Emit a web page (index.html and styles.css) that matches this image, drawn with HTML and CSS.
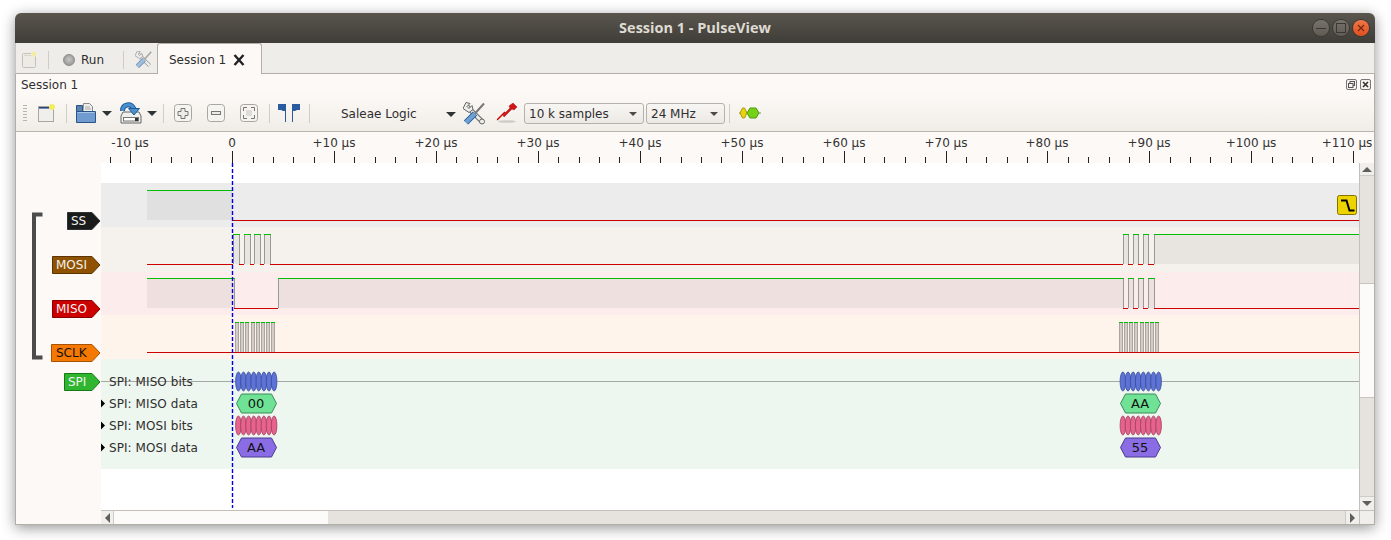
FILE: index.html
```html
<!DOCTYPE html>
<html lang="en">
<head>
<meta charset="utf-8">
<title>Session 1 - PulseView</title>
<link rel="stylesheet" href="styles.css">
</head>
<body>
<div class="window">
  <header class="titlebar">
    <span class="title">Session 1 - PulseView</span>
    <div class="winbtns">
      <span class="winbtn"><svg width="16" height="16" viewBox="0 0 16 16"><path class="wb-glyph" d="M3 8.5H13"/></svg></span>
      <span class="winbtn"><svg width="16" height="16" viewBox="0 0 16 16"><rect class="wb-glyph" x="3.5" y="3.5" width="9" height="9"/></svg></span>
      <span class="winbtn close"><svg width="16" height="16" viewBox="0 0 16 16"><path class="wb-close" d="M5 5L11 11M11 5L5 11"/></svg></span>
    </div>
  </header>

  <nav class="tabbar">
    <svg class="ta-new" width="15" height="17" viewBox="0 0 15 17"><rect x="0.5" y="2.5" width="13" height="14" rx="1" fill="#ecebe6" stroke="#c4c1bb"/><path d="M2 4.500H11" stroke="#d8d6d2"/><circle cx="12" cy="3" r="2.500" fill="#f3ec9e" stroke="#f3efc8"/></svg>
    <span class="tsep ta-sep1"></span>
    <span class="run-led ta-led"></span>
    <span class="run-label">Run</span>
    <span class="tsep ta-sep2"></span>
    <svg class="ta-tool" width="17" height="17" viewBox="0 0 22 22">
      <g opacity=".6">
        <path d="M4 4L19 19" stroke="#666" stroke-width="5" fill="none"/><path d="M4 4L19 19" stroke="#eee" stroke-width="3" fill="none"/>
        <path d="M0 6L3 0l4 1-3 3 2 2 3-3 1 4-4 3z" fill="#eee" stroke="#666"/>
        <path d="M21 1L12 11" stroke="#777" stroke-width="2" fill="none"/>
        <path d="M12 11L3 20" stroke="#1f5a96" stroke-width="6" fill="none"/><path d="M12 11L3 20" stroke="#6fa0d4" stroke-width="4" fill="none"/>
      </g>
    </svg>
    <div class="tab">
      <span>Session 1</span>
      <svg class="tab-x" width="12" height="12" viewBox="0 0 12 12"><path d="M1.500 1L10.500 11M10.500 1L1.500 11" stroke="#222" stroke-width="2.400" fill="none"/></svg>
    </div>
  </nav>

  <section class="panel">
    <div class="dock-title">
      <span>Session 1</span>
      <div class="dock-btns">
        <svg width="11" height="11" viewBox="0 0 11 11"><rect x="0.5" y="0.5" width="10" height="10" rx="1.5" fill="#f5f2ee" stroke="#777"/><rect x="4" y="2.5" width="4.5" height="4" fill="none" stroke="#555"/><rect x="2.5" y="4.5" width="4.5" height="4" fill="#f5f2ee" stroke="#555"/></svg>
        <svg width="11" height="11" viewBox="0 0 11 11"><rect x="0.5" y="0.5" width="10" height="10" rx="1.5" fill="#f5f2ee" stroke="#777"/><path d="M3 3L8 8M8 3L3 8" stroke="#333" stroke-width="1.6"/></svg>
      </div>
    </div>

    <div class="toolbar">
      <span class="grip"></span>
      <svg class="i-new" width="18" height="18" viewBox="0 0 18 18"><rect x="1.5" y="2.5" width="15" height="15" fill="#f1efec" stroke="#a8a6a2"/><rect x="2" y="3" width="13" height="1.6" fill="#26477e"/><circle cx="15" cy="3" r="2.700" fill="#f8ef4a" stroke="#f2e88c"/></svg>
      <span class="tsep i-sep1"></span>
      <svg class="i-open" width="20" height="20" viewBox="0 0 20 20"><path d="M7.500 0.500h6l3 3v6h-9.500z" fill="#eeeeec" stroke="#888"/><path d="M9 4h5M9 6h6" stroke="#aaa"/><path d="M0.500 2.500h6v16h-6z" fill="#5a82b0" stroke="#2d5286"/><path d="M0.500 19.500V8.500h19v11z" fill="#6f9bd1" stroke="#2d5286"/><path d="M1.500 9.500h17" stroke="#a6c4e6"/></svg>
      <span class="caret i-c1"></span>
      <svg class="i-save" width="22" height="22" viewBox="0 0 22 22"><path d="M1 14l2-4h16l2 4v7H1z" fill="#eeeeec" stroke="#666"/><rect x="3.500" y="15.500" width="15" height="3.500" fill="#fff" stroke="#777"/><rect x="15" y="16" width="3" height="3" fill="#333"/><path d="M2.500 9C2.500 2 11 0.500 14 7" fill="none" stroke="#1f5a96" stroke-width="5"/><path d="M2.500 9C2.500 2 11 0.500 14 7" fill="none" stroke="#4a90d0" stroke-width="3"/><path d="M8.500 6.500h11l-5.500 6.500z" fill="#4a90d0" stroke="#1f5a96"/></svg>
      <span class="caret i-c2"></span>
      <span class="tsep i-sep2"></span>
      <svg class="i-zin" width="18" height="18" viewBox="0 0 18 18"><rect class="zbtn" x="0.500" y="0.500" width="17" height="17" rx="3"/><path class="zg" d="M7 4.500h4v3h3v4h-3v3H7v-3H4v-4h3z"/></svg>
      <svg class="i-zout" width="18" height="18" viewBox="0 0 18 18"><rect class="zbtn" x="0.500" y="0.500" width="17" height="17" rx="3"/><rect class="zg" x="4.500" y="7.500" width="9" height="3"/></svg>
      <svg class="i-zfit" width="18" height="18" viewBox="0 0 18 18"><rect class="zbtn" x="0.500" y="0.500" width="17" height="17" rx="3"/><path class="zg zg-line" d="M3.500 7V3.500H7M11 3.500h3.500V7M14.500 11v3.500H11M7 14.500H3.500V11"/><rect x="6" y="6" width="6" height="6" fill="#dedcd8"/></svg>
      <span class="tsep i-sep3"></span>
      <svg class="i-flags" width="22" height="18" viewBox="0 0 22 18"><path d="M0 0h8v18H7V7H5L3 6H0zM14 0h8v6h-3l-2 1h-2v11h-1z" fill="#2a5b9e"/></svg>
      <span class="tsep i-sep4"></span>
      <div class="device"><span>Saleae Logic</span><span class="caret"></span></div>
      <svg class="i-tool" width="22" height="23" viewBox="0 0 22 22">
        <path d="M4 4L19 19" stroke="#666" stroke-width="5" fill="none"/><path d="M4 4L19 19" stroke="#eeeeec" stroke-width="3" fill="none"/>
        <path d="M0 6L3 0l4 1-3 3 2 2 3-3 1 4-4 3z" fill="#eeeeec" stroke="#666"/>
        <circle cx="19" cy="19" r="2.500" fill="#eeeeec" stroke="#666"/>
        <path d="M21 1L12 11" stroke="#777" stroke-width="2" fill="none"/>
        <path d="M12 11L3 20" stroke="#1f5a96" stroke-width="6" fill="none"/><path d="M12 11L3 20" stroke="#6fa0d4" stroke-width="4" fill="none"/>
      </svg>
      <svg class="i-probe" width="20" height="20" viewBox="0 0 20 20"><ellipse cx="10" cy="18.500" rx="9" ry="1.300" fill="#cfcbc6"/><path d="M0 17L8 9" stroke="#c00" stroke-width="1.500"/><path d="M6 12L13 5l-1-2 4-3 4 4-3 3-2-1-8 8z" fill="#d01818" stroke="#a50e0e" stroke-width="0.500"/></svg>
      <div class="combo samples"><span>10 k samples</span><span class="combo-caret"></span></div>
      <div class="combo rate"><span>24 MHz</span><span class="combo-caret"></span></div>
      <span class="tsep i-sep5"></span>
      <svg class="i-dec" width="22" height="12" viewBox="0 0 22 12"><path d="M0 6h22" stroke="#888"/><path d="M1 6l2.500-5h2L8 6l-2.500 5h-2z" fill="#e9d30a" stroke="#a89a0a"/><path d="M8 6l3-5h6l3 5-3 5h-6z" fill="#74d216" stroke="#4f9a0a"/></svg>
    </div>

    <div class="ruler">
      <svg width="1358" height="31" viewBox="16 132 1358 31">
        <g class="rlabels">
          <text x="130" y="147">-10 µs</text><text x="232" y="147">0</text><text x="334" y="147">+10 µs</text><text x="436" y="147">+20 µs</text><text x="538" y="147">+30 µs</text><text x="640" y="147">+40 µs</text><text x="742" y="147">+50 µs</text><text x="844" y="147">+60 µs</text><text x="946" y="147">+70 µs</text><text x="1047" y="147">+80 µs</text><text x="1149" y="147">+90 µs</text><text x="1251" y="147">+100 µs</text><text x="1347" y="147">+110 µs</text>
        </g>
        <path class="ticks" d="M130.500 151V163M232.500 151V163M334.500 151V163M436.500 151V163M538.500 151V163M640.500 151V163M742.500 151V163M844.500 151V163M946.500 151V163M1047.500 151V163M1149.500 151V163M1251.500 151V163M1353.500 151V163
        M110.500 157V163M151.500 157V163M171.500 157V163M191.500 157V163M212.500 157V163M253.500 157V163M273.500 157V163M293.500 157V163M314.500 157V163M354.500 157V163M375.500 157V163M395.500 157V163M416.500 157V163M456.500 157V163M477.500 157V163M497.500 157V163M518.500 157V163M558.500 157V163M579.500 157V163M599.500 157V163M619.500 157V163M660.500 157V163M681.500 157V163M701.500 157V163M721.500 157V163M762.500 157V163M782.500 157V163M803.500 157V163M823.500 157V163M864.500 157V163M884.500 157V163M905.500 157V163M925.500 157V163M966.500 157V163M986.500 157V163M1007.500 157V163M1027.500 157V163M1068.500 157V163M1088.500 157V163M1109.500 157V163M1129.500 157V163M1170.500 157V163M1190.500 157V163M1210.500 157V163M1231.500 157V163M1272.500 157V163M1292.500 157V163M1312.500 157V163M1333.500 157V163"/>
      </svg>
    </div>

    <div class="viewport">
      <div class="headers">
        <svg class="bracket" width="14" height="150" viewBox="0 0 14 150"><path d="M12.500 2.500H4V145.500H12.500" fill="none" stroke="#4c4c4c" stroke-width="4"/></svg>
        <svg class="tag t-first" width="34" height="18" viewBox="0 0 34 18"><path d="M0.500 0.500H25L33 9L25 17.500H0.500z" fill="#1a1c1c" stroke="#2e3436"/><text x="4" y="13" class="tagtxt">SS</text></svg>
        <svg class="tag" width="49" height="18" viewBox="0 0 49 18"><path d="M0.500 0.500H40L48 9L40 17.500H0.500z" fill="#8f5202" stroke="#5e3500"/><text x="4" y="13" class="tagtxt">MOSI</text></svg>
        <svg class="tag" width="49" height="18" viewBox="0 0 49 18"><path d="M0.500 0.500H40L48 9L40 17.500H0.500z" fill="#cc0000" stroke="#8a0000"/><text x="4" y="13" class="tagtxt">MISO</text></svg>
        <svg class="tag" width="50" height="18" viewBox="0 0 50 18"><path d="M0.500 0.500H41L49 9L41 17.500H0.500z" fill="#f57900" stroke="#a85300"/><text x="5" y="13" class="tagtxt dark">SCLK</text></svg>
        <svg class="tag t-spi" width="37" height="18" viewBox="0 0 37 18"><path d="M0.500 0.500H28L36 9L28 17.500H0.500z" fill="#2fb52f" stroke="#157a15"/><text x="4" y="13" class="tagtxt">SPI</text></svg>
      </div>

      <svg class="traces" width="1258" height="347" viewBox="101 163 1258 347">
        <defs>
          <g id="bits">
            <ellipse cx="2.900" rx="2.800" ry="9.500"/><ellipse cx="8" rx="2.800" ry="9.500"/><ellipse cx="13.100" rx="2.800" ry="9.500"/><ellipse cx="18.200" rx="2.800" ry="9.500"/><ellipse cx="23.300" rx="2.800" ry="9.500"/><ellipse cx="28.400" rx="2.800" ry="9.500"/><ellipse cx="33.500" rx="2.800" ry="9.500"/><ellipse cx="38.600" rx="2.800" ry="9.500"/>
          </g>
          <polygon id="hex" points="0.500,0 5.500,-9.500 35.500,-9.500 40.500,0 35.500,9.500 5.500,9.500"/>
        </defs>
        <rect class="band b-ss" x="101" y="183" width="1258" height="44"/>
        <rect class="band b-mosi" x="101" y="227" width="1258" height="45"/>
        <rect class="band b-miso" x="101" y="272" width="1258" height="43"/>
        <rect class="band b-sclk" x="101" y="315" width="1258" height="44"/>
        <rect class="band b-spi" x="101" y="359" width="1258" height="110"/>

        <path class="hi-fill" d="M147 191H232V220H147z"/>
        <path class="hi-fill" d="M233 235H239V264H233zM244 235H250V264H244zM254 235H260V264H254zM264 235H270V264H264zM1123 235H1128V264H1123zM1133 235H1138V264H1133zM1143 235H1148V264H1143zM1154 235H1359V264H1154z"/>
        <path class="hi-fill" d="M147 279H234V308H147zM278 279H1123V308H278zM1128 279H1133V308H1128zM1138 279H1143V308H1138zM1148 279H1154V308H1148z"/>
        <path class="hi-fill strong" d="M235 323H239V352H235zM240 323H244V352H240zM245 323H249V352H245zM251 323H255V352H251zM256 323H260V352H256zM261 323H265V352H261zM266 323H270V352H266zM271 323H275V352H271zM1119 323H1123V352H1119zM1124 323H1128V352H1124zM1129 323H1133V352H1129zM1134 323H1138V352H1134zM1140 323H1144V352H1140zM1145 323H1149V352H1145zM1150 323H1154V352H1150zM1155 323H1159V352H1155z"/>

        <path class="edge" d="M233.500 235V264M239.500 235V264M244.500 235V264M250.500 235V264M254.500 235V264M260.500 235V264M264.500 235V264M270.500 235V264M1123.500 235V264M1128.500 235V264M1133.500 235V264M1138.500 235V264M1143.500 235V264M1148.500 235V264M1154.500 235V264
        M234.500 279V308M278.500 279V308M1123.500 279V308M1128.500 279V308M1133.500 279V308M1138.500 279V308M1143.500 279V308M1148.500 279V308M1154.500 279V308"/>
        <path class="edge soft" d="M235.500 323V352M238.500 323V352M240.500 323V352M243.500 323V352M245.500 323V352M248.500 323V352M251.500 323V352M254.500 323V352M256.500 323V352M259.500 323V352M261.500 323V352M264.500 323V352M266.500 323V352M269.500 323V352M271.500 323V352M274.500 323V352
        M1119.500 323V352M1122.500 323V352M1124.500 323V352M1127.500 323V352M1129.500 323V352M1132.500 323V352M1134.500 323V352M1137.500 323V352M1140.500 323V352M1143.500 323V352M1145.500 323V352M1148.500 323V352M1150.500 323V352M1153.500 323V352M1155.500 323V352M1158.500 323V352"/>

        <path class="high" d="M147 190.500H232M233 234.500H240M244 234.500H251M254 234.500H261M264 234.500H271M1123 234.500H1129M1133 234.500H1139M1143 234.500H1149M1154 234.500H1359M147 278.500H235M278 278.500H1124M1128 278.500H1134M1138 278.500H1144M1148 278.500H1155M235 322.500H239M240 322.500H244M245 322.500H249M251 322.500H255M256 322.500H260M261 322.500H265M266 322.500H270M271 322.500H275M1119 322.500H1123M1124 322.500H1128M1129 322.500H1133M1134 322.500H1138M1140 322.500H1144M1145 322.500H1149M1150 322.500H1154M1155 322.500H1159"/>
        <path class="low" d="M232 220.500H1359M147 264.500H233M239 264.500H244M250 264.500H254M260 264.500H264M270 264.500H1123M1128 264.500H1133M1138 264.500H1143M1148 264.500H1154M234 308.500H278M1123 308.500H1128M1133 308.500H1138M1143 308.500H1148M1154 308.500H1359M147 352.500H1359"/>

        <path class="spi-line" d="M101 381.500H1359"/>
        <g class="rowlabels">
          <text x="109" y="386">SPI: MISO bits</text>
          <text x="109" y="408">SPI: MISO data</text>
          <text x="109" y="430">SPI: MOSI bits</text>
          <text x="109" y="452">SPI: MOSI data</text>
        </g>
        <path class="expander" d="M101 399.500L105 403.500L101 407.500zM101 421.500L105 425.500L101 429.500zM101 443.500L105 447.500L101 451.500z"/>

        <use href="#bits" class="bits-blue" x="235.500" y="381.500"/>
        <use href="#bits" class="bits-blue" x="1120" y="381.500"/>
        <use href="#bits" class="bits-pink" x="235.500" y="425.500"/>
        <use href="#bits" class="bits-pink" x="1120" y="425.500"/>
        <use href="#hex" class="hex-green" x="236" y="403.500"/>
        <use href="#hex" class="hex-green" x="1120" y="403.500"/>
        <use href="#hex" class="hex-purple" x="236" y="447.500"/>
        <use href="#hex" class="hex-purple" x="1120" y="447.500"/>
        <g class="hexlabels">
          <text x="256" y="408">00</text><text x="1140" y="408">AA</text>
          <text x="256" y="452">AA</text><text x="1140" y="452">55</text>
        </g>

        <path class="cursor" d="M232.500 163V508"/>

        <rect class="trig" x="1337.500" y="195.500" width="19" height="19" rx="2"/>
        <path class="trig-glyph" d="M1341 200.500H1346.500L1349.500 210.500H1354.500"/>
      </svg>

      <div class="vscroll">
        <span class="sbtn up"></span>
        <span class="track v1"></span>
        <span class="thumb v2"></span>
        <span class="track v3"></span>
        <span class="sbtn down"></span>
      </div>
    </div>

    <div class="hscroll-row">
      <div class="hs-pad"></div>
      <div class="hscroll">
        <span class="sbtn left"></span>
        <span class="thumb h1"></span>
        <span class="track h2"></span>
        <span class="sbtn right"></span>
      </div>
      <div class="corner"></div>
    </div>
  </section>
</div>
</body>
</html>
```

FILE: styles.css
```css
* { box-sizing: border-box; }
html, body { margin: 0; height: 100%; background: #fff; overflow: hidden; }
body { font-family: "DejaVu Sans", sans-serif; font-size: 12px; color: #2e2e2e; }

.window {
  width: 1360px;
  height: 512px;
  margin: 13px 0 0 15px;
  display: flex;
  flex-direction: column;
  border-radius: 6px 6px 0 0;
  box-shadow: 0 3px 14px rgba(0, 0, 0, .42);
  background: #efedea;
}
.titlebar {
  height: 30px;
  flex: none;
  display: flex;
  align-items: center;
  justify-content: center;
  position: relative;
  padding-bottom: 2px;
  border-radius: 6px 6px 0 0;
  background: linear-gradient(#5a564e, #3f3d38);
}
.title { font: 700 14.5px "Open Sans", sans-serif; color: #dfdbd2; }
.winbtns { position: absolute; right: 6px; top: 7px; display: flex; gap: 4px; }
.winbtn {
  width: 16px; height: 16px; border-radius: 50%;
  background: linear-gradient(#77736b, #5f5b54);
  box-shadow: 0 0 0 1px #3a3833;
}
.winbtn svg { display: block; }
.winbtn.close { background: linear-gradient(#f07746, #df4f1f); }
.wb-glyph { fill: none; stroke: #3a3833; }
.wb-close { fill: none; stroke: #6d2a10; stroke-width: 1.2; }

.tabbar {
  height: 31px;
  flex: none;
  display: flex;
  align-items: center;
  padding: 3px 0 0 6px;
  background: #efedea;
  border-bottom: 1px solid #b2aea8;
  border-left: 1px solid #c9c6c1;
  border-right: 1px solid #c9c6c1;
}
.tsep { width: 1px; height: 19px; background: #d0cdc8; flex: none; }
.ta-new { flex: none; }
.ta-sep1 { margin-left: 11px; height: 18px; }
.run-led {
  width: 12px; height: 12px; border-radius: 50%;
  background: radial-gradient(circle at 50% 45%, #c8c8c6, #8a8a86);
  border: 1px solid #8c8c88;
}
.ta-led { margin-left: 14px; }
.run-label { margin-left: 6px; width: 23px; }
.ta-sep2 { margin-left: 19px; height: 18px; }
.ta-tool { margin-left: 11px; flex: none; }
.tab {
  margin: -3px 0 0 5px;
  width: 105px;
  height: 31px;
  align-self: flex-start;
  display: flex;
  align-items: center;
  padding: 2px 0 0 11px;
  background: #fdf9f6;
  border: 1px solid #b2aea8;
  border-bottom: none;
  border-radius: 3px 3px 0 0;
  position: relative;
}
.tab-x { margin-left: 7px; }

.panel {
  flex: 1;
  min-height: 0;
  display: flex;
  flex-direction: column;
  background: #fdf9f6;
  border: 1px solid #b2aea8;
  border-top: none;
}
.dock-title {
  height: 19px;
  flex: none;
  display: flex;
  align-items: center;
  justify-content: space-between;
  padding: 2px 3px 0 5px;
}
.dock-btns { display: flex; gap: 3px; }
.dock-btns svg { display: block; }

.toolbar {
  height: 39px;
  flex: none;
  display: flex;
  align-items: center;
  padding: 2px 0 0 7px;
  background: linear-gradient(#fdf9f6, #f0ede8);
  border-bottom: 1px solid #b8b5af;
}
.toolbar svg { flex: none; display: block; }
.grip {
  width: 4px; height: 18px;
  background: radial-gradient(circle, #b8b5b0 0.7px, transparent 1px) 0 0 / 2px 3px;
}
.caret { width: 0; height: 0; border: 5px solid transparent; border-top: 5px solid #2e3436; border-bottom: 0; flex: none; }
.i-new { margin-left: 10px; }
.i-sep1 { margin-left: 11px; }
.i-open { margin-left: 9px; }
.i-c1 { margin-left: 6px; }
.i-save { margin-left: 8px; }
.i-c2 { margin-left: 5px; }
.i-sep2 { margin-left: 6px; }
.i-zin { margin-left: 10px; }
.i-zout, .i-zfit { margin-left: 15px; }
.i-sep3 { margin-left: 11px; }
.i-flags { margin-left: 8px; }
.i-sep4 { margin-left: 9px; }
.zbtn { fill: #f6f4f1; stroke: #a9a6a1; }
.zg { fill: #eeece8; stroke: #767672; }
.zg-line { fill: none; }
.device {
  margin-left: 31px;
  width: 116px;
  height: 22px;
  display: flex;
  align-items: center;
  justify-content: space-between;
  padding: 2px 1px 0 0;
}
.i-tool { margin-left: 6px; }
.i-probe { margin-left: 12px; }
.combo {
  height: 21px;
  margin-top: 1px;
  display: flex;
  align-items: center;
  justify-content: space-between;
  padding: 1px 5px 0 4px;
  background: linear-gradient(#f8f6f3, #ece9e5);
  border: 1px solid #b5b1ab;
  border-radius: 3px;
  flex: none;
}
.samples { width: 120px; margin-left: 7px; }
.rate { width: 79px; margin-left: 2px; }
.combo-caret { width: 0; height: 0; border: 4px solid transparent; border-top: 4px solid #4a4a48; border-bottom: 0; margin-right: 1px; }
.i-sep5 { margin-left: 4px; }
.i-dec { margin-left: 9px; }

.ruler { height: 31px; flex: none; }
.ruler svg { display: block; }
.rlabels text { font: 12px "DejaVu Sans", sans-serif; fill: #333; text-anchor: middle; }
.ticks { stroke: #222; fill: none; shape-rendering: crispEdges; }

.viewport { flex: none; height: 347px; display: flex; }
.headers {
  width: 85px;
  flex: none;
  position: relative;
  display: flex;
  flex-direction: column;
  align-items: flex-end;
}
.bracket { position: absolute; left: 14px; top: 49px; }
.tag { display: block; margin-top: 26px; flex: none; }
.t-first { margin-top: 49px; }
.t-spi { margin-top: 11px; }
.tagtxt { font: 12px "DejaVu Sans", sans-serif; fill: #f2f2f0; }
.tagtxt.dark { fill: #111; }

.traces { display: block; flex: none; background: #fff; }
.band { stroke: none; }
.b-ss { fill: #ececec; }
.b-mosi { fill: #f5f1ec; }
.b-miso { fill: #fcecec; }
.b-sclk { fill: #fef4ec; }
.b-spi { fill: #eef7ef; }
.hi-fill { fill: rgba(0, 0, 0, .05); }
.hi-fill.strong { fill: rgba(0, 0, 0, .16); }
.edge { stroke: #989896; fill: none; shape-rendering: crispEdges; }
.edge.soft { stroke: #a8a6a2; }
.high { stroke: #00bf00; fill: none; shape-rendering: crispEdges; }
.low { stroke: #cc0000; fill: none; shape-rendering: crispEdges; }
.spi-line { stroke: #a6a8a6; fill: none; shape-rendering: crispEdges; }
.rowlabels text { font: 12px "DejaVu Sans", sans-serif; fill: #2e2e2e; letter-spacing: .07px; }
.expander { fill: #000; }
.bits-blue { fill: #5d73d6; stroke: #3a4a9a; stroke-width: .8; }
.bits-pink { fill: #e5638c; stroke: #a33c5e; stroke-width: .8; }
.hex-green { fill: #6fe295; stroke: #3c8a5a; }
.hex-purple { fill: #8a6de4; stroke: #4a3a92; }
.hexlabels text { font: 13px "DejaVu Sans", sans-serif; fill: #111; text-anchor: middle; }
.cursor { stroke: #0000e0; stroke-width: 1.4; stroke-dasharray: 4 2; fill: none; }
.trig { fill: #edd400; stroke: #857300; }
.trig-glyph { fill: none; stroke: #000; stroke-width: 2; }

.vscroll { width: 15px; flex: none; display: flex; flex-direction: column; border-left: 1px solid #c3c0bb; }
.sbtn { flex: none; display: flex; align-items: center; justify-content: center; background: #f1efeb; }
.sbtn::after { content: ""; width: 0; height: 0; border: 5px solid transparent; }
.sbtn.up { height: 13px; border-bottom: 1px solid #cfccc7; }
.sbtn.up::after { border-bottom: 5px solid #5f5f5b; border-top: 0; }
.sbtn.down { height: 14px; border-top: 1px solid #cfccc7; }
.sbtn.down::after { border-top: 5px solid #5f5f5b; border-bottom: 0; }
.track { background: #e6e3df; display: block; }
.thumb { background: #fdfbf9; display: block; }
.v1 { height: 107px; flex: none; }
.v2 { height: 115px; flex: none; border-top: 1px solid #c9c6c1; border-bottom: 1px solid #c9c6c1; }
.v3 { flex: 1; }

.hscroll-row { height: 14px; flex: none; display: flex; }
.hs-pad { width: 85px; flex: none; }
.hscroll { width: 1258px; flex: none; display: flex; border-top: 1px solid #c3c0bb; }
.sbtn.left { width: 13px; border-right: 1px solid #cfccc7; }
.sbtn.left::after { border-right: 5px solid #5f5f5b; border-left: 0; }
.sbtn.right { width: 14px; border-left: 1px solid #cfccc7; }
.sbtn.right::after { border-left: 5px solid #5f5f5b; border-right: 0; }
.h1 { width: 214px; flex: none; }
.h2 { flex: 1; }
.corner { flex: 1; background: #f1efeb; border-top: 1px solid #c3c0bb; border-left: 1px solid #c3c0bb; }
```
